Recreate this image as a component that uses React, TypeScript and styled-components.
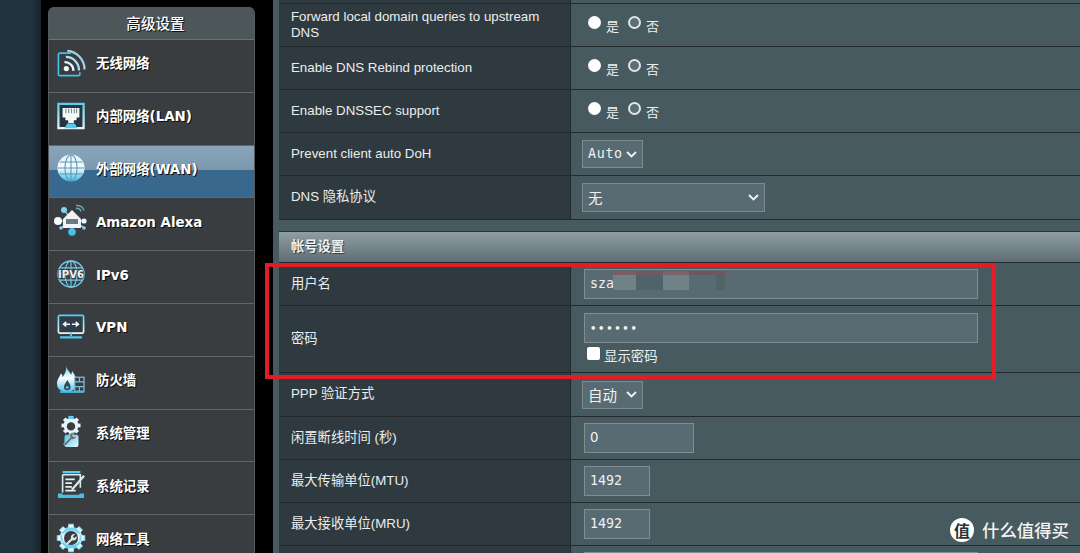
import React from 'react';
import styled, { createGlobalStyle } from 'styled-components';

const Global = createGlobalStyle`
  html, body { margin: 0; padding: 0; background: #000; }
  * { box-sizing: border-box; }
`;

const CJK = `"Noto Sans CJK SC", sans-serif`;

const Page = styled.div`
  position: relative;
  width: 1080px;
  height: 553px;
  overflow: hidden;
  display: flex;
  background: #000;
`;
const Band = styled.div`
  width: 41px;
  flex: none;
  background: linear-gradient(90deg, #20323e 0%, #20323e 80%, #1a2329 100%);
`;
const Sidebar = styled.nav`
  width: 207px;
  margin: 7px 0 0 7px;
  flex: none;
  height: 560px;
  border-radius: 6px 6px 0 0;
  background: #393d40;
  overflow: hidden;
  border-left: 1px solid #55595c;
  border-right: 1px solid #55595c;
`;
const SideTitle = styled.div`
  height: 33px;
  padding-left: 8px;
  background: #4d5659;
  border-bottom: 1px solid #6d7275;
  color: #fff;
  font: 500 14.6px/32px ${CJK};
  text-align: center;
  text-shadow: 1px 1px 0 #111;
`;
const SideItem = styled.div<{ $active?: boolean }>`
  height: 52.8px;
  display: flex;
  align-items: center;
  padding: 0 0 3px 7px;
  gap: 10px;
  border-bottom: 1px solid #63676a;
  background: ${p => (p.$active ? 'linear-gradient(180deg,#8aa5b9 0%,#7a99af 47%,#39688f 48%,#39688f 100%)' : '#393d40')};
`;
const IconSlot = styled.div`
  width: 30px;
  height: 28px;
  flex: none;
  display: flex;
  align-items: center;
  justify-content: center;
  margin-bottom: 3px;
  svg { width: 28px; height: 28px; display: block; overflow: visible; flex: none; }
`;
const SideLabel = styled.span`
  color: #fff;
  font: 700 13.4px/16px "DejaVu Sans", ${CJK};
  text-shadow: 1px 1px 0 #0c0c0c;
  white-space: nowrap;
`;

const Main = styled.main`
  width: 807px;
  margin-left: 18px;
  flex: none;
  padding-left: 6px;
  background: #475a60;
`;
const Rule = styled.div`
  height: 11px;
  background: #475a60;
`;
const Row = styled.div<{ $h: number }>`
  display: grid;
  grid-template-columns: 292px 1fr;
  height: ${p => p.$h}px;
  border-bottom: 1px solid #23292d;
`;
const Label = styled.div`
  background: #2f3a40;
  border-right: 1px solid #23292d;
  padding: 0 12px;
  display: flex;
  align-items: center;
  color: #ebeeee;
  font: 13.3px/16.5px "Liberation Sans", ${CJK};
`;
const Cell = styled.div<{ $pl?: number }>`
  background: #475a60;
  padding-left: ${p => p.$pl ?? 13}px;
  display: flex;
  align-items: center;
`;
const SectionHeader = styled.div`
  height: 32px;
  padding-left: 12px;
  background: linear-gradient(180deg, #8f9ea3 0%, #5f6e74 100%);
  border-top: 1px solid #2a3338;
  border-bottom: 1px solid #23292d;
  color: #eef1f1;
  font: 700 13.3px/28px ${CJK};
  text-shadow: 1px 1px 0 #3a4347;
`;
const Radio = styled.input.attrs({ type: 'radio', readOnly: true })`
  appearance: none;
  width: 13px;
  height: 13px;
  margin: 0 0 3px;
  border-radius: 50%;
  background: #fff;
  flex: none;
  &:checked { background: #5d6e74; border: 2.5px solid #e2e6e7; }
`;
const RadioText = styled.span`
  color: #eef0f0;
  font: 13px/16px ${CJK};
  margin: 3px 9px 0 5px;
  width: 13px;
`;
const RadioGroup = styled.div`
  display: flex;
  align-items: center;
  padding: 0 0 2px 4px;
`;
const SelectBox = styled.div<{ $w: number; $h: number; $mono?: boolean }>`
  width: ${p => p.$w}px;
  height: ${p => p.$h}px;
  background: #596b72;
  border: 1px solid #7d8b90;
  color: #f0f2f2;
  font: ${p => (p.$mono ? `13.3px/16px "DejaVu Sans Mono", ${CJK}` : `14.5px/16px ${CJK}`)};
  letter-spacing: ${p => (p.$mono ? '0.7px' : '0')};
  display: flex;
  align-items: center;
  justify-content: space-between;
  padding: 0 5px;
  svg { width: 11px; height: 7px; flex: none; }
`;
const TextField = styled.div<{ $w: number; $plain?: boolean }>`
  position: relative;
  width: ${p => p.$w}px;
  height: 30px;
  flex: none;
  background: #596b72;
  border: 1px solid #7d8f95;
  color: #f0f2f2;
  font: 13.3px/28px ${p => (p.$plain ? '"DejaVu Sans", sans-serif' : '"DejaVu Sans Mono", monospace')};
  padding-left: 5px;
`;
const Dots = styled.span`
  font: 700 10px/28px "DejaVu Sans", sans-serif;
  letter-spacing: 1.7px;
`;
const Mosaic = styled.div`
  position: absolute;
  left: 28px;
  top: 1px;
  height: 19px;
  display: flex;
`;
const Tile = styled.div<{ $w: number; $top: string; $c: string }>`
  width: ${p => p.$w}px;
  height: 19px;
  background: linear-gradient(180deg, ${p => p.$top} 0, ${p => p.$top} 4px, ${p => p.$c} 4px);
`;
const PwdStack = styled.div`
  display: flex;
  flex-direction: column;
  padding-top: 7px;
  height: 100%;
`;
const ShowRow = styled.label`
  display: flex;
  align-items: center;
  margin-top: 3px;
  padding-left: 3px;
  color: #eef0f0;
  font: 13.4px/18px ${CJK};
`;
const Check = styled.input.attrs({ type: 'checkbox', readOnly: true })`
  appearance: none;
  width: 13px;
  height: 13px;
  margin: 0 4px 4px 0;
  border-radius: 2px;
  background: #fff;
  flex: none;
`;
const Highlight = styled.div`
  position: absolute;
  left: 265px;
  top: 263px;
  width: 731px;
  height: 116px;
  border: 4px solid #e31c25;
  pointer-events: none;
`;
const Watermark = styled.div`
  position: absolute;
  left: 950px;
  top: 518px;
  display: flex;
  align-items: center;
  gap: 8px;
`;
const WmBadge = styled.div`
  width: 24px;
  height: 24px;
  border-radius: 50%;
  background: #fff;
  color: #263238;
  font: 700 16px/24px "Noto Sans CJK SC", sans-serif;
  text-align: center;
`;
const WmText = styled.span`
  color: #f2f4f4;
  font: 500 17.4px/24px "Noto Sans CJK SC", sans-serif;
  white-space: nowrap;
`;

const defs = (
  <svg width="0" height="0" style={{ position: 'absolute' }}>
    <defs>
      <linearGradient id="cy" x1="0" y1="0" x2="0" y2="1">
        <stop offset="0" stopColor="#dff4fb" />
        <stop offset="0.5" stopColor="#f4fbfe" />
        <stop offset="1" stopColor="#35bdea" />
      </linearGradient>
      <linearGradient id="cy2" x1="0" y1="0" x2="1" y2="1">
        <stop offset="0" stopColor="#49c6ef" />
        <stop offset="1" stopColor="#eaf8fd" />
      </linearGradient>
      <linearGradient id="cy3" x1="0" y1="0" x2="0" y2="1">
        <stop offset="0" stopColor="#5cc9ee" />
        <stop offset="0.45" stopColor="#ffffff" />
        <stop offset="1" stopColor="#45c3ee" />
      </linearGradient>
      <linearGradient id="fr" x1="0" y1="0" x2="0" y2="1">
        <stop offset="0" stopColor="#5ecbef" />
        <stop offset="1" stopColor="#e8f6fb" />
      </linearGradient>
    </defs>
  </svg>
);

const Wifi = () => (
  <svg viewBox="0 0 30 30">
    <path d="M15 4.500H3a1.500 1.500 0 0 0-1.500 1.500v21a1.500 1.500 0 0 0 1.500 1.500h20a1.500 1.500 0 0 0 1.500-1.500v-2" fill="none" stroke="#42c2ec" strokeWidth="1.800" />
    <circle cx="10" cy="21" r="2.800" fill="#f2fbfe" />
    <path d="M8 14a9 9 0 0 1 9.500 9.500" fill="none" stroke="#e4f5fb" strokeWidth="2.500" />
    <path d="M9.500 8.500a14 14 0 0 1 14 14.500" fill="none" stroke="#a9e2f5" strokeWidth="2.400" />
    <path d="M11 2a20 20 0 0 1 18.500 20" fill="none" stroke="#a4d2e0" strokeWidth="2.400" />
  </svg>
);
const Lan = () => (
  <svg viewBox="0 0 30 30">
    <rect x="1.500" y="2" width="27" height="26" fill="#263640" stroke="url(#fr)" strokeWidth="2.400" />
    <path d="M6 6.500h18v10h-3v3h-3v3h-6v-3H9v-3H6z" fill="#f4f8fa" />
    <path d="M9.500 7v5M12.500 7v5M15.500 7v5M18.500 7v5M21 7v5" stroke="#7e8d94" strokeWidth="1.200" />
    <path d="M8 28l3-5h8l3 5z" fill="#56c9ef" />
  </svg>
);
const GlobeLines = ({ c, w = 1.3 }: { c: string; w?: number }) => (
  <g fill="none" stroke={c} strokeWidth={w}>
    <ellipse cx="15" cy="15" rx="6.500" ry="14" />
    <path d="M15 1v28M3 8.500h24M1 15h28M3 21.500h24" />
  </g>
);
const Globe = () => (
  <svg viewBox="0 0 30 30">
    <circle cx="15" cy="15" r="14.500" fill="url(#cy)" />
    <GlobeLines c="#5f93b5" w={1.100} />
  </svg>
);
const Alexa = () => (
  <svg viewBox="0 0 36 34" style={{ width: 36, height: 34, marginLeft: 2 }}>
    <path d="M4 17h26M18 17v10M10 6l4 5M7 24l5-4M30 24l-5-4" stroke="#bfe4f2" strokeWidth="1.200" />
    <path d="M9 15l9-9 9 9v9H9z" fill="#eef4f7" />
    <rect x="12" y="15" width="12" height="5" fill="#6d7a80" />
    <circle cx="4" cy="17" r="4" fill="#f6fbfd" />
    <circle cx="30" cy="17" r="2.600" fill="#eaf7fc" />
    <circle cx="18" cy="28" r="3.800" fill="#45c3ee" />
    <circle cx="10" cy="6" r="3" fill="#7fd4f0" />
    <circle cx="7" cy="24" r="1.800" fill="#7fd4f0" />
    <circle cx="30" cy="24" r="1.800" fill="#7fd4f0" />
    <path d="M22 1.500a7 7 0 0 1 8 5M22 4.500a4 4 0 0 1 5 3" fill="none" stroke="#67a9bf" strokeWidth="1.500" />
  </svg>
);
const Ipv6 = () => (
  <svg viewBox="0 0 30 30">
    <circle cx="15" cy="15" r="14" fill="#34454d" stroke="#6ec8e6" strokeWidth="1.500" />
    <GlobeLines c="#7cc8e2" w={1.200} />
    <text x="15" y="19" textAnchor="middle" fontFamily="DejaVu Sans" fontWeight="700" fontSize="10.800" fill="#eef2f3" stroke="#3a4147" strokeWidth="1.500" paintOrder="stroke">IPV6</text>
  </svg>
);
const Vpn = () => (
  <svg viewBox="0 0 30 30">
    <rect x="1.500" y="2.500" width="27" height="19" rx="1.500" fill="#2f3e46" stroke="url(#fr)" strokeWidth="1.800" />
    <path d="M7 12h7M10 9.500L7 12l3 2.500M23 12h-7M20 9.500l3 2.500-3 2.500" fill="none" stroke="#f4f8fa" strokeWidth="1.600" />
    <path d="M14 21h2v4h-2z" fill="#5ac8ec" />
    <rect x="3" y="25" width="24" height="2.200" rx="1" fill="#52c6ec" />
  </svg>
);
const Fire = () => (
  <svg viewBox="0 0 30 30">
    <path d="M10 0c1 5 3 5 5 9 1-1 1-3 1-4 3 4 5 8 5 13 0 6-4 10-10 10S0 25 0 19c0-5 3-7 4-11 2 1 2 3 2 4 2-3 4-6 4-12z" fill="url(#cy3)" />
    <path d="M11 15c2 3 3.500 5 3.500 7.500a3.500 3.500 0 0 1-7 0c0-2.500 2-4.500 3.500-7.500z" fill="#36464e" />
    <circle cx="11" cy="23" r="1.500" fill="#45c3ee" />
    <g fill="#393d40" stroke="#7cc2d8" strokeWidth="1.300">
      <rect x="19" y="12" width="10" height="15" />
      <path d="M19 17h10M19 22h10M24 12v5M24 22v5" fill="none" />
    </g>
    <rect x="3" y="27" width="26" height="1.800" fill="#45bfe9" />
  </svg>
);
const Gear = ({ cx, cy, r, t, fill }: { cx: number; cy: number; r: number; t: number; fill: string }) => (
  <g fill={fill}>
    <circle cx={cx} cy={cy} r={r} />
    {[0, 45, 90, 135, 180, 225, 270, 315].map(a => (
      <rect key={a} x={cx - t / 2} y={cy - r - t * 0.55} width={t} height={t} transform={`rotate(${a} ${cx} ${cy})`} />
    ))}
  </g>
);
const GearWrench = () => (
  <svg viewBox="0 0 30 34" style={{ height: 32 }}>
    <Gear cx={15} cy={10} r={8} t={4} fill="#e6f6fb" />
    <path d="M15 0h3v3h-6V0z" fill="#5cc9ee" />
    <circle cx="15" cy="11" r="4.500" fill="#393d40" />
    <path d="M9 20h12a2 2 0 0 1 2 2v9a2 2 0 0 1-2 2H10a2 2 0 0 1-2-2v-9z" fill="url(#cy2)" />
    <path d="M7 30l7-7a4 4 0 0 1 1-5l4-.5-2.500 3 1.500 2 3-2a4.500 4.500 0 0 1-5.500 4.500L9 32z" fill="#5e6f76" stroke="#e0e8eb" strokeWidth=".6" />
  </svg>
);
const LogIcon = () => (
  <svg viewBox="0 0 30 30">
    <rect x="6" y="0" width="19" height="2.500" fill="#5cc9ed" />
    <path d="M6 4h19v14M6 4v19" fill="none" stroke="#d9ecf3" strokeWidth="1.700" />
    <path d="M9 9h10M9 13h7M9 17h7M9 21h11" stroke="#e8f1f4" strokeWidth="1.800" />
    <path d="M16 20l13-15" stroke="#dfe8eb" strokeWidth="2.400" />
    <path d="M1 24h5v1.500h18V24h5v4a1 1 0 0 1-1 1H2a1 1 0 0 1-1-1z" fill="#45bfe9" />
  </svg>
);
const ToolGear = () => (
  <svg viewBox="0 0 30 30">
    <Gear cx={15} cy={15} r={12} t={6} fill="url(#cy3)" />
    <circle cx="15" cy="15" r="7.500" fill="#393d40" />
    <path d="M9.500 21l5.500-5.500a3.500 3.500 0 0 1 4.500-4.500l-2.500 2.500 1.500 1.500 2.500-2a3.500 3.500 0 0 1-4.500 4.500L11 22.500z" fill="#dce4e7" />
  </svg>
);

const items: { label: string; icon: React.ReactNode; active?: boolean }[] = [
  { label: '无线网络', icon: <Wifi /> },
  { label: '内部网络(LAN)', icon: <Lan /> },
  { label: '外部网络(WAN)', icon: <Globe />, active: true },
  { label: 'Amazon Alexa', icon: <Alexa /> },
  { label: 'IPv6', icon: <Ipv6 /> },
  { label: 'VPN', icon: <Vpn /> },
  { label: '防火墙', icon: <Fire /> },
  { label: '系统管理', icon: <GearWrench /> },
  { label: '系统记录', icon: <LogIcon /> },
  { label: '网络工具', icon: <ToolGear /> },
];

const Chevron = () => (
  <svg viewBox="0 0 11 7"><path d="M1 1l4.500 4.500L10 1" fill="none" stroke="#f2f4f4" strokeWidth="1.800" /></svg>
);

const YesNo = () => (
  <RadioGroup>
    <Radio />
    <RadioText>是</RadioText>
    <Radio defaultChecked />
    <RadioText>否</RadioText>
  </RadioGroup>
);

const tiles = [
  { w: 23, top: '#7d5c63', c: '#6f8287' },
  { w: 27, top: '#6f5a62', c: '#4f6369' },
  { w: 26, top: '#7d6068', c: '#6f8287' },
  { w: 27, top: '#6e565d', c: '#596b72' },
  { w: 9, top: '#71565d', c: '#4f6369' },
];

export default function App() {
  return (
    <Page>
      <Global />
      {defs}
      <Band />
      <Sidebar>
        <SideTitle>高级设置</SideTitle>
        {items.map(i => (
          <SideItem key={i.label} $active={i.active}>
            <IconSlot>{i.icon}</IconSlot>
            <SideLabel>{i.label}</SideLabel>
          </SideItem>
        ))}
      </Sidebar>
      <Main>
        <Row $h={4}><Label /><Cell /></Row>
        <Row $h={43}><Label>Forward local domain queries to upstream DNS</Label><Cell><YesNo /></Cell></Row>
        <Row $h={43}><Label>Enable DNS Rebind protection</Label><Cell><YesNo /></Cell></Row>
        <Row $h={43}><Label>Enable DNSSEC support</Label><Cell><YesNo /></Cell></Row>
        <Row $h={43}><Label>Prevent client auto DoH</Label><Cell $pl={11}><SelectBox $w={61} $h={28} $mono>Auto<Chevron /></SelectBox></Cell></Row>
        <Row $h={44}><Label>DNS 隐私协议</Label><Cell $pl={11}><SelectBox $w={183} $h={29}>无<Chevron /></SelectBox></Cell></Row>
        <Rule />
        <SectionHeader>帐号设置</SectionHeader>
        <Row $h={43}>
          <Label>用户名</Label>
          <Cell>
            <TextField $w={394}>sza<Mosaic>{tiles.map((t, i) => <Tile key={i} $w={t.w} $top={t.top} $c={t.c} />)}</Mosaic></TextField>
          </Cell>
        </Row>
        <Row $h={67}>
          <Label>密码</Label>
          <Cell>
            <PwdStack>
              <TextField $w={394}><Dots>••••••</Dots></TextField>
              <ShowRow><Check />显示密码</ShowRow>
            </PwdStack>
          </Cell>
        </Row>
        <Row $h={44}><Label>PPP 验证方式</Label><Cell $pl={11}><SelectBox $w={61} $h={28}>自动<Chevron /></SelectBox></Cell></Row>
        <Row $h={43}><Label>闲置断线时间 (秒)</Label><Cell><TextField $w={110} $plain>0</TextField></Cell></Row>
        <Row $h={43}><Label>最大传输单位(MTU)</Label><Cell><TextField $w={66}>1492</TextField></Cell></Row>
        <Row $h={43}><Label>最大接收单位(MRU)</Label><Cell><TextField $w={66}>1492</TextField></Cell></Row>
        <Row $h={43}><Label /><Cell><TextField $w={394} /></Cell></Row>
      </Main>
      <Highlight />
      <Watermark>
        <WmBadge>值</WmBadge>
        <WmText>什么值得买</WmText>
      </Watermark>
    </Page>
  );
}
